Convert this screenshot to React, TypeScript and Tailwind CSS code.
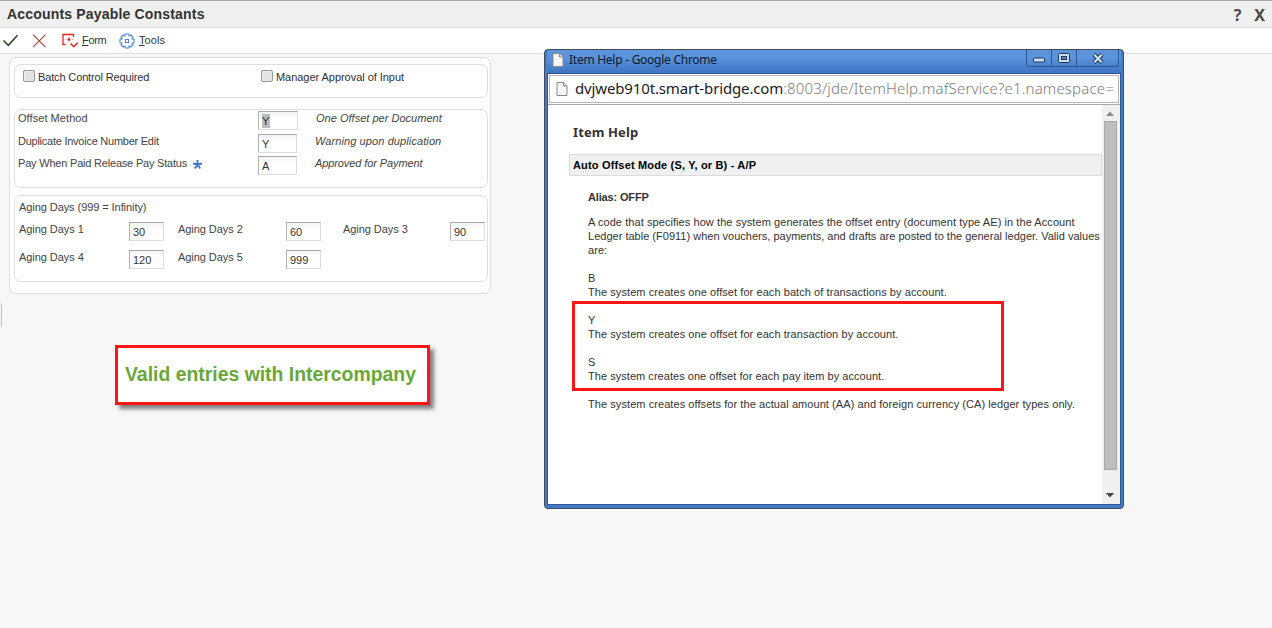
import type { ReactNode } from 'react';

interface FieldProps {
  value: string;
  width?: string;
  selected?: boolean;
}

// Sunken text input of the form
const Field = ({ value, width = 'w-[35px]', selected = false }: FieldProps) => (
  <div
    className={`${width} h-[19px] shrink-0 border border-t-[#a9a9a9] border-l-[#b4b4b4] border-r-[#dedede] border-b-[#dedede] bg-linear-to-b from-[#f3f3f3] to-white to-40% pl-[3px] pt-[2px] text-[11px] leading-[14px] text-[#333]`}
  >
    <span className={selected ? 'inline-block h-[14px] w-[8px] bg-[#bdbdbd]' : ''}>{value}</span>
  </div>
);

const Checkbox = ({ label, tracking }: { label: string; tracking: string }) => (
  <div className="flex items-start">
    <span className="h-3 w-3 rounded-[2px] border border-[#9a9a9a] bg-[#e2e3e5] shadow-[inset_1px_1px_0_#f0f0f0]" />
    <span className={`ml-[3px] mt-px text-[11px] leading-3 text-[#303030] ${tracking}`}>{label}</span>
  </div>
);

const Group = ({ className, children }: { className: string; children: ReactNode }) => (
  <section className={`rounded-[7px] border border-[#dfdfdf] ${className}`}>{children}</section>
);

const offsetRows = [
  { label: 'Offset Method', value: 'Y', text: 'One Offset per Document', row: 'h-[23px]', field: 'w-10', labelTracking: 'tracking-[0.06px]', tracking: 'tracking-[0.02px]' },
  { label: 'Duplicate Invoice Number Edit', value: 'Y', text: 'Warning upon duplication', row: 'h-[22px]', field: 'w-[39px]', labelTracking: 'tracking-[-0.25px]', tracking: 'tracking-[0.1px]' },
  { label: 'Pay When Paid Release Pay Status', value: 'A', text: 'Approved for Payment', row: 'h-[22px]', field: 'w-[39px]', labelTracking: 'tracking-[-0.2px]', tracking: 'tracking-[-0.1px]' },
];

const agingRows = [
  [
    { label: 'Aging Days 1', value: '30' },
    { label: 'Aging Days 2', value: '60' },
    { label: 'Aging Days 3', value: '90' },
  ],
  [
    { label: 'Aging Days 4', value: '120' },
    { label: 'Aging Days 5', value: '999' },
  ],
];

const Toolbar = () => (
  <nav className="flex h-[26px] items-center border-b border-[#dedede] bg-white text-[11px] text-[#333]">
    <svg className="ml-[2px]" width="17" height="14" viewBox="0 0 17 14" fill="none">
      <path d="M1.5 6.5 6.3 11.3 15.5 1.3" stroke="#2b4420" strokeWidth="1.5" />
    </svg>
    <svg className="ml-[13px]" width="15" height="14" viewBox="0 0 15 14" fill="none">
      <path d="M1 .7 13.5 13.2M13.5 .7 1 13.2" stroke="#a8483a" strokeWidth="1.1" />
    </svg>
    <svg className="ml-[14px]" width="18" height="15" viewBox="0 0 18 15" fill="none">
      <path d="M4.5 11.5H2V1.5H12.5V4" stroke="#f0201c" strokeWidth="1.3" />
      <path d="M4.5 6.5H12M8 3.5V9.5" stroke="#e8a49c" strokeWidth="1" strokeDasharray="2 1" />
      <path d="M7 6.5H9M8 5V8" stroke="#d51b16" strokeWidth="1.3" />
      <path d="M9.5 10.5 12.8 13.8 16.7 9.8" stroke="#f0201c" strokeWidth="1.5" />
    </svg>
    <span className="ml-[3px] w-[25px] tracking-[-0.3px]"><u>F</u>orm</span>
    <svg className="ml-[12px]" width="16" height="16" viewBox="0 0 16 16" fill="none" stroke="#4a86d0">
      <path d="M6.3 1h3.4l.4 2 1.7-1 2.2 2.2-1 1.7 2 .4v3.4l-2 .4 1 1.7-2.2 2.2-1.7-1-.4 2H6.3l-.4-2-1.7 1L2 11.8l1-1.7-2-.4V6.3l2-.4-1-1.7L4.2 2l1.7 1z" strokeWidth="1.1" />
      <path d="M6.5 6.5h3v3h-3z" strokeWidth="1.1" />
    </svg>
    <span className="ml-[4px] tracking-[0.1px]"><u>T</u>ools</span>
  </nav>
);

const PageIcon = () => (
  <svg width="12" height="14" viewBox="0 0 12 14">
    <path d="M1 .5H7.5L11 4V13.5H1z" fill="#f6f6f6" stroke="#8b8b8b" />
    <path d="M7.5 .5V4H11" fill="#ddd" stroke="#8b8b8b" />
  </svg>
);

const HelpWindow = () => (
  <div className="absolute left-[544px] top-[49px] flex h-[460px] w-[580px] flex-col rounded-[4px] border border-[#414b59] bg-[#4479c9] px-[2px] pb-[3px]">
    <div className="flex h-[23px] shrink-0 items-start bg-linear-to-b from-[#5c94dc] from-30% to-[#3e73c2]">
      <span className="ml-[5px] mt-[3px]"><PageIcon /></span>
      <span className="ml-[5px] mt-[2px] flex-1 font-['Noto_Sans'] text-[12px] leading-4 tracking-[-0.26px] text-[#0c1a30]">
        Item Help - Google Chrome
      </span>
      <div className="mr-[2px] flex h-[17px] rounded-b-[3px] border border-t-0 border-[#2c5591]">
        <span className="flex w-[25px] items-center justify-center border-r border-[#2c5591]">
          <svg className="mt-[3px]" width="12" height="6"><rect x=".5" y="1" width="11" height="4" rx="1" fill="#c8ddf6" stroke="#26384f" /></svg>
        </span>
        <span className="flex w-[25px] items-center justify-center border-r border-[#2c5591]">
          <svg width="12" height="10">
            <rect x=".5" y=".5" width="11" height="9" rx="1" fill="#c8ddf6" stroke="#26384f" />
            <rect x="3.5" y="3.5" width="5" height="3" fill="#4f86cf" stroke="#26384f" />
          </svg>
        </span>
        <span className="flex w-[41px] items-center justify-center">
          <svg width="12" height="11" viewBox="0 0 12 11" fill="none">
            <path d="M2 1.5 10 9.5M10 1.5 2 9.5" stroke="#26384f" strokeWidth="4" />
            <path d="M2.3 1.8 9.7 9.2M9.7 1.8 2.3 9.2" stroke="#d3e4f8" strokeWidth="2" />
          </svg>
        </span>
      </div>
    </div>
    <div className="flex min-h-0 flex-1 flex-col border border-[#2f5795] bg-white">
      <div className="mx-px mt-px flex h-[28px] shrink-0 items-center border border-[#b9b4bb] pl-[6px]">
        <PageIcon />
        <span className="-mt-[2px] ml-[7px] whitespace-nowrap font-['Noto_Sans'] text-[15px] font-light leading-5 tracking-[0.16px] text-[#7c7c7c]">
          <span className="font-normal tracking-[-0.14px] text-[#1a1a1a]">dvjweb910t.smart-bridge.com</span>:8003/jde/ItemHelp.mafService?e1.namespace=
        </span>
      </div>
      <div className="mt-px flex min-h-0 flex-1 border-t border-[#a9a9a9]">
        <article className="min-w-0 flex-1 pl-[21px] text-[11px] leading-[14px] text-[#333]">
          <h2 className="mt-[18px] pl-1 font-['Noto_Sans'] text-[13px] font-bold leading-[18px] tracking-[0.1px]">Item Help</h2>
          <h3 className="mt-[13px] h-[22px] border border-[#dcdcdc] bg-[#f0f0f0] pl-[3px] font-bold leading-5 tracking-[0.17px] text-black">
            Auto Offset Mode (S, Y, or B) - A/P
          </h3>
          <div className="whitespace-nowrap pl-[19px] tracking-[0.07px]">
            <p className="mt-[14px] font-bold tracking-[-0.15px]">Alias: OFFP</p>
            <p className="mt-[11px]">A code that specifies how the system generates the offset entry (document type AE) in the Account</p>
            <p className="tracking-[0.01px]">Ledger table (F0911) when vouchers, payments, and drafts are posted to the general ledger. Valid values</p>
            <p>are:</p>
            <p className="mt-[14px]">B</p>
            <p>The system creates one offset for each batch of transactions by account.</p>
            <p className="mt-[14px]">Y</p>
            <p>The system creates one offset for each transaction by account.</p>
            <p className="mt-[14px]">S</p>
            <p className="tracking-[0.04px]">The system creates one offset for each pay item by account.</p>
            <p className="mt-[14px]">The system creates offsets for the actual amount (AA) and foreign currency (CA) ledger types only.</p>
          </div>
        </article>
        <div className="flex w-[18px] shrink-0 flex-col items-start bg-[#f0f0f0] pl-[2px]">
          <svg className="ml-[2px] mt-[6px]" width="8" height="5"><path d="M0 5 4 .5 8 5z" fill="#8a8a8a" /></svg>
          <div className="mt-[5px] h-[349px] w-[13px] border border-[#a8a8a8] bg-[#bebebe]" />
          <svg className="ml-[2px] mt-[23px]" width="8" height="5"><path d="M0 0 4 4.5 8 0z" fill="#444" /></svg>
        </div>
      </div>
    </div>
  </div>
);

const App = () => {
  return (
    <div className="relative h-[628px] w-[1272px] overflow-hidden bg-[#f7f7f7] font-['Liberation_Sans',Arial,sans-serif]">
      <header className="flex h-[28px] items-center justify-between border-b border-t border-b-[#dedede] border-t-[#a5a5a5] bg-[#f0f0f0] pl-[7px] pr-[7px] text-[#333]">
        <h1 className="text-[14px] font-bold tracking-[0.18px]">Accounts Payable Constants</h1>
        <div className="flex gap-[13px] pt-px font-['Noto_Sans'] text-[16px] font-bold leading-none text-[#4a4a4a]">
          <span>?</span>
          <span>X</span>
        </div>
      </header>
      <Toolbar />

      <main className="ml-[9px] mt-[3px] h-[237px] w-[482px] rounded-[7px] border border-[#dfdfdf] bg-white px-[4px] pt-[6px]">
        <Group className="flex h-[34px] w-[474px] pl-2 pt-[5px]">
          <div className="w-[238px]"><Checkbox label="Batch Control Required" tracking="tracking-[-0.14px]" /></div>
          <Checkbox label="Manager Approval of Input" tracking="tracking-[-0.04px]" />
        </Group>

        <Group className="mt-[11px] h-[79px] w-[474px] pl-[3px] pt-px">
          {offsetRows.map((item, i) => (
            <div key={item.label} className={`flex ${item.row}`}>
              <div className={`flex w-[240px] text-[11px] leading-[14px] text-[#444] ${item.labelTracking}`}>
                {item.label}
                {/* Required field marker */}
                {i === 2 && (
                  <svg className="ml-[6px] mt-1" width="9" height="9" viewBox="0 0 9 9">
                    <path d="M4.5 0V4.5M0 3.5 4.5 4.5 9 3.5M1.8 8.5 4.5 4.5 7.2 8.5" stroke="#4278c8" strokeWidth="1.9" fill="none" />
                  </svg>
                )}
              </div>
              <Field value={item.value} width={item.field} selected={i === 0} />
              <em className={`ml-[18px] ${item.tracking} text-[11px] leading-[14px] text-[#444]`}>{item.text}</em>
            </div>
          ))}
        </Group>

        <Group className="mt-[7px] h-[87px] w-[474px] pl-[4px] pt-[4px] text-[11px] leading-[14px] text-[#444]">
          <p className="mb-[8px] tracking-[-0.07px]">Aging Days (999 = Infinity)</p>
          {agingRows.map((row, i) => (
            <div key={i} className="grid h-[28px] grid-cols-[110px_49px_108px_57px_107px_35px]">
              {row.map((item) => (
                <div key={item.label} className="contents">
                  <span className="tracking-[-0.06px]">{item.label}</span>
                  <Field value={item.value} />
                </div>
              ))}
            </div>
          ))}
        </Group>
      </main>

      {/* Handle of the collapsed side panel */}
      <div className="mt-[9px] h-6 w-[2px] rounded-r-sm border-r border-[#b9bcc4]" />

      <div className="absolute left-[115px] top-[345px] flex h-[60px] w-[315px] items-center border-[3px] border-[#fb1616] bg-white pl-[7px] text-[19.4px] font-bold text-[#69a837] shadow-[4px_4px_4px_#808080]">
        <span className="whitespace-nowrap">Valid entries with Intercompany</span>
      </div>

      <HelpWindow />
      <div className="absolute left-[572px] top-[301px] h-[90px] w-[432px] border-[3px] border-[#fb1616]" />
    </div>
  );
};

export default App;
